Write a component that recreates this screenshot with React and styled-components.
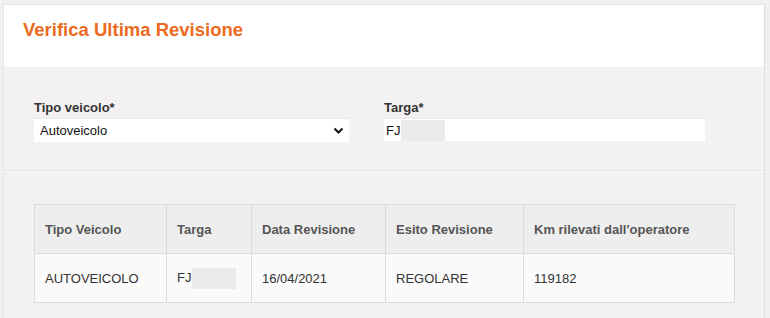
import * as React from 'react';
import styled, { createGlobalStyle } from 'styled-components';

const GlobalStyle = createGlobalStyle`
  body {
    margin: 0;
    background: #f0f0f0;
    font-family: "Liberation Sans", Arial, sans-serif;
  }
`

const Card = styled.div`
  margin: 4px 0 0 3px;
  width: 760px;
  border-top: 1px solid #e6e6e6;
  border-left: 1px solid #e6e6e6;
  border-right: 1px solid #dedede;
  background: #f3f1f2;
  min-height: 320px;
`

const Header = styled.div`
  background: #fff;
  height: 62px;
  padding: 13px 19px 0;
  box-sizing: border-box;
`

const Title = styled.h1`
  margin: 0;
  font-size: 18.5px;
  line-height: 24px;
  font-weight: bold;
  color: #ec6a1e;
`

const FormRow = styled.div`
  display: flex;
  gap: 35px;
  padding: 33px 30px 28px;
  border-bottom: 1px solid #e3e1e2;
  box-shadow: 0 1px 0 #fbfafa;
`

const Field = styled.div`
  display: flex;
  flex-direction: column;
  width: ${p => p.$w}px;
`

const Label = styled.label`
  font-size: 13px;
  font-weight: bold;
  color: #333;
  line-height: 16px;
  margin-bottom: 2px;
`

const SelectBox = styled.div`
  height: 23px;
  background: #fff;
  border-top: 1px solid #ebebeb;
  display: flex;
  align-items: center;
  justify-content: space-between;
  padding: 0 5px 0 6px;
  font-size: 13px;
  color: #111;
`

const InputBox = styled.div`
  height: 22px;
  background: #fff;
  border-top: 1px solid #ebebeb;
  display: flex;
  align-items: center;
  padding-left: 2px;
  font-size: 13px;
  color: #111;
`

const Redacted = styled.span`
  display: inline-block;
  vertical-align: middle;
  width: ${p => p.$w}px;
  height: ${p => p.$h}px;
  background: #ebebeb;
  margin-left: 1px;
`

const TableWrap = styled.div`
  padding: 33px 29px 16px 30px;
`

const Table = styled.table`
  border-collapse: collapse;
  width: 700px;
  font-size: 13px;
  table-layout: fixed;
`

const Th = styled.th`
  text-align: left;
  font-weight: bold;
  color: #555;
  background: #efeeee;
  border: 1px solid #dcdcdc;
  height: 48px;
  padding: 0 10px;
`

const Td = styled.td`
  color: #333;
  background: #fafafa;
  border: 1px solid #dcdcdc;
  height: 48px;
  padding: 0 10px;
`

const Chevron = () => (
  <svg width="11" height="8" viewBox="0 0 11 8">
    <path d="M1.5 1.5 L5.5 5.5 L9.5 1.5" fill="none" stroke="#111" strokeWidth="2" />
  </svg>
)

export default function App() {
  const cols = [
    ['Tipo Veicolo', 132],
    ['Targa', 85],
    ['Data Revisione', 134],
    ['Esito Revisione', 138],
    ["Km rilevati dall'operatore", 211],
  ]
  return <>
    <GlobalStyle />
    <Card>
      <Header>
        <Title>Verifica Ultima Revisione</Title>
      </Header>
      <FormRow>
        <Field $w={315}>
          <Label>Tipo veicolo*</Label>
          <SelectBox>
            <span>Autoveicolo</span>
            <Chevron />
          </SelectBox>
        </Field>
        <Field $w={321}>
          <Label>Targa*</Label>
          <InputBox>
            FJ<Redacted $w={44} $h={21} />
          </InputBox>
        </Field>
      </FormRow>
      <TableWrap>
        <Table>
          <colgroup>
            {cols.map(([t, w]) => <col key={t} style={{ width: w }} />)}
          </colgroup>
          <thead>
            <tr>
              {cols.map(([t]) => <Th key={t}>{t}</Th>)}
            </tr>
          </thead>
          <tbody>
            <tr>
              <Td>AUTOVEICOLO</Td>
              <Td>FJ<Redacted $w={44} $h={21} /></Td>
              <Td>16/04/2021</Td>
              <Td>REGOLARE</Td>
              <Td>119182</Td>
            </tr>
          </tbody>
        </Table>
      </TableWrap>
    </Card>
  </>
}
